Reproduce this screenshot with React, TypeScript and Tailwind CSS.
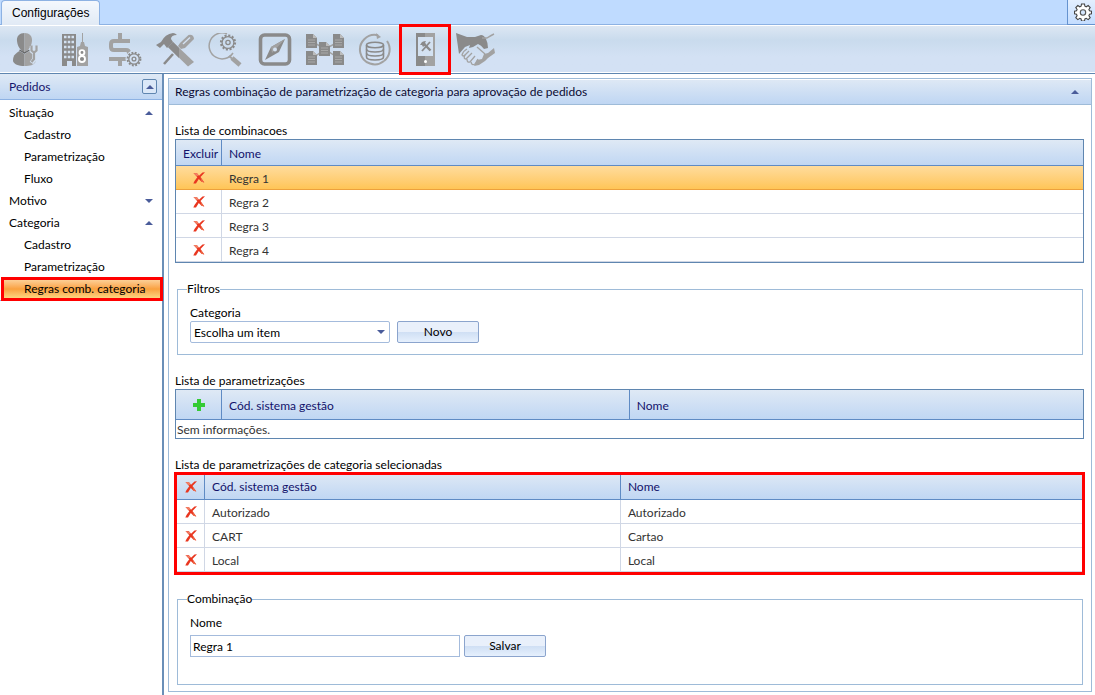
import React, { useState } from "react";

const DARK = "#8a8a8a";
const LIGHT = "#a2a2a2";

type GearProps = { cx: number; cy: number; r: number };

function Gear({ cx, cy, r }: GearProps) {
  return (
    <g fill="none" stroke={DARK}>
      <circle cx={cx} cy={cy} r={r + 0.6} strokeWidth={2} strokeDasharray={`${(r + 0.6) * 0.29} ${(r + 0.6) * 0.2336}`} />
      <circle cx={cx} cy={cy} r={r - 0.6} strokeWidth={1.3} />
      <circle cx={cx} cy={cy} r={r * 0.33} strokeWidth={1.3} />
    </g>
  );
}

function Doc({ x, y }: { x: number; y: number }) {
  return (
    <g>
      <path d={`M${x} ${y}h7l4 4v10h-11z`} fill={DARK} />
      <path d={`M${x + 7} ${y}l4 4h-4z`} fill="#bcbcbc" />
      <path d={`M${x + 2} ${y + 6}h7M${x + 2} ${y + 8.5}h7M${x + 2} ${y + 11}h7`} stroke="#a8a8a8" strokeWidth={1} />
    </g>
  );
}

const tools: { name: string; art: React.ReactNode; active?: boolean }[] = [
  {
    name: "Usuários",
    art: (
      <>
        <path d="M19.500 0c-5 0-8 3-7.500 8 .3 4 2 7 4 9l3.500 3z" fill={DARK} />
        <path d="M19.500 0c5 0 8 3 7.500 8-.3 4-2 7-4 9l-3.500 3z" fill={LIGHT} />
        <path d="M14.500 18l5 3v12c-6 0-11-2-11.500-5 0-5 1.500-7 6.500-10z" fill={DARK} />
        <path d="M24.500 18l-5 3v12c6 0 9-1 11-4l-2.500-8z" fill={LIGHT} />
        <path d="M14.500 17l5 3 5-3" fill="none" stroke="#666" strokeWidth={1.4} />
        <path d="M27 13v5l2.500 2 2.500-2v-5M29.500 19v7l-3 4" fill="none" stroke="#d3e1f1" strokeWidth={4.500} />
        <path d="M26.500 12.500v5l2.500 2 2.500-2v-5M29 19v7l-2.500 3" fill="none" stroke={LIGHT} strokeWidth={2.200} />
      </>
    ),
  },
  {
    name: "Empresas",
    art: (
      <>
        <path d="M7 1h14v32h-4v-5h-5v5H7z" fill={DARK} />
        <path d="M9 4h10M9 9h10M9 14h10M9 19h10M9 24h10" stroke="#d3e1f1" strokeWidth={2.500} strokeDasharray="2.500 1.250" />
        <path d="M22 33V14l3-1 1-4h1V0h1v9h1l1 4 3 1v19z" fill={LIGHT} />
        <circle cx="27" cy="19.500" r="2.400" fill={DARK} stroke="#fff" strokeWidth={1.900} />
        <circle cx="27" cy="26" r="3" fill={DARK} stroke="#fff" strokeWidth={1.900} />
      </>
    ),
  },
  {
    name: "Financeiro",
    art: (
      <>
        <path d="M15 0v8M15 26v7" stroke={LIGHT} strokeWidth={4} />
        <path d="M25 8H9q-3 0-3 3v3q0 3 3 3h12q3 0 3 3v3q0 3-3 3H4" fill="none" stroke={LIGHT} strokeWidth={4} />
        <circle cx="29" cy="26" r="8.500" fill="#d3e1f3" />
        <Gear cx={29} cy={26} r={5.800} />
      </>
    ),
  },
  {
    name: "Ferramentas",
    art: (
      <>
        <path d="M18 21L9 31" stroke={DARK} strokeWidth={2.600} />
        <path d="M25 10l8.500-8q5-1 5.500 4l-9 9-4 1-3-3z" fill={LIGHT} />
        <path d="M28 11l7-6.500" stroke="#d3e1f1" strokeWidth={1.400} />
        <path d="M18 9l21 20-6 4.500L13 14z" fill={LIGHT} />
        <path d="M18 9l6 6v10L13 14z" fill={DARK} />
        <path d="M1 12l5-3q4-8 12-9 2 0 4 2-6 0-6 4l2 3-6 6-3-4-2 2-2 2z" fill={DARK} />
      </>
    ),
  },
  {
    name: "Pesquisa",
    art: (
      <>
        <path d="M28 20A13 13 0 1 1 22 .8" fill="none" stroke={LIGHT} strokeWidth={1.500} />
        <Gear cx={23} cy={9.500} r={6.500} />
        <path d="M24 23l3 2.500" stroke={LIGHT} strokeWidth={2} />
        <path d="M27 25l8 7" fill="none" stroke={LIGHT} strokeWidth={4.500} />
      </>
    ),
  },
  {
    name: "Navegação",
    art: (
      <>
        <rect x="5.500" y="2" width="29" height="29" rx="4" fill="none" stroke={DARK} strokeWidth={3.600} />
        <path d="M30 6L16 14l-6 13 14-8z" fill={DARK} />
        <path d="M30 6L16 14l1 6z" fill={LIGHT} />
        <circle cx="20" cy="16.500" r="2" fill="#d3e1f1" />
      </>
    ),
  },
  {
    name: "Fluxos",
    art: (
      <>
        <path d="M8 9l12 7-12 9M33 9l-13 7 13 9" fill="none" stroke={LIGHT} strokeWidth={1.500} />
        <Doc x={1} y={1} />
        <Doc x={1} y={18} />
        <Doc x={14} y={9} />
        <Doc x={28} y={1} />
        <Doc x={28} y={18} />
      </>
    ),
  },
  {
    name: "Banco de dados",
    art: (
      <>
        <path d="M23 2.300A14.700 14.700 0 1 0 29 28" fill="none" stroke={LIGHT} strokeWidth={2} />
        <path d="M32 8A14.700 14.700 0 0 1 29 28" fill="none" stroke={LIGHT} strokeWidth={2} />
        <path d="M21 0l5 4-4 2z" fill={LIGHT} />
        <path d="M11.500 12v12q0 3 8.500 3t8.500-3V12" fill="none" stroke={DARK} strokeWidth={1.600} />
        <ellipse cx="20" cy="12" rx="8.500" ry="2.700" fill="none" stroke={DARK} strokeWidth={1.600} />
        <path d="M11.500 16q0 3 8.500 3t8.500-3M11.500 20q0 3 8.500 3t8.500-3" fill="none" stroke={DARK} strokeWidth={1.500} />
      </>
    ),
  },
  {
    name: "Dispositivos",
    active: true,
    art: (
      <>
        <path d="M11 0h10v33H11z" fill={DARK} />
        <path d="M20 0h10v33H20z" fill={LIGHT} />
        <path d="M13 4h15v19H13z" fill="#d3e1f1" />
        <path d="M17 18l8-9" stroke={DARK} strokeWidth={1.800} />
        <path d="M18.500 10.500l7 7" stroke={DARK} strokeWidth={2.400} />
        <path d="M15 12l2-3q2-1 4-1l-1 2 1 1-3 3-1-2z" fill={DARK} />
        <circle cx="20.500" cy="28.500" r="1.500" fill="#fff" />
      </>
    ),
  },
  {
    name: "Parcerias",
    art: (
      <>
        <path d="M1 0l11 4h8l6-2q3 0 5 4 2 4 2 9l-4 1q-3-4-6-5l-5 3-4 1 1-3-5 2-6 7z" fill={DARK} />
        <path d="M27 5h5q3-2 7-4" fill="none" stroke={LIGHT} strokeWidth={1.400} />
        <g fill="none" stroke={LIGHT} strokeWidth={1.300}>
          <path d="M12 16q-4 2-5 6 1 2 3 0l4-4" />
          <path d="M10 22q-2 4 1 4l6-6" />
          <path d="M12 26q0 4 3 3l5-6" />
          <path d="M16 29q1 4 4 2l3-5" />
          <path d="M22 14l8 7" />
        </g>
        <path d="M39 15l1 5-7 5-3 3-6 4-5 1 3-6 5-1 2-5 4-1z" fill={LIGHT} />
      </>
    ),
  },
];

function DeleteIcon() {
  return (
    <svg width="12" height="12" viewBox="0 0 12 12" fill="none" className="block" aria-hidden="true">
      <path d="M.5 1l3.500.3L6 3.800 9.500.5 12 .3 7.500 5l3.800 5.500-2.800-.8L5.800 7 3 11.500.3 11.500 1.500 9 4.300 5.200z" fill="#e9361f" />
      <path d="M.5 1l3.500.3L5.500 3.200 4 4.200z" fill="#f38468" />
      <path d="M7.500 5.500l3.800 5-2.800-.8z" fill="#ee6a48" />
    </svg>
  );
}

function Arrow({ down = false }: { down?: boolean }) {
  return (
    <svg width="8" height="4" viewBox="0 0 8 4" className="block" aria-hidden="true">
      <path d={down ? "M0 0h8L4 4z" : "M0 4h8L4 0z"} fill="#4a5c9a" />
    </svg>
  );
}

const headRow = "bg-linear-to-b from-[#dfe9f5] to-[#bfd6f3] text-[#12126b]";
const buttonLook =
  "h-[22px] w-[82px] rounded-xs border border-[#8ba4cd] bg-linear-to-b from-[#e9f0fb] from-50% via-[#cfdff4] via-50% to-[#e6f0fd]";
const th = "border-b border-[#5f8bc4] px-[7px] pt-0.5 text-left font-normal";
const td = "h-[24px] border-[#d0d7e5] px-[7px] pt-0.5";

function DeleteButton({ label }: { label: string }) {
  return (
    <button type="button" aria-label={label} className="mx-auto block">
      <DeleteIcon />
    </button>
  );
}

const menu: { title: string; open: boolean; items: string[] }[] = [
  { title: "Situação", open: true, items: ["Cadastro", "Parametrização", "Fluxo"] },
  { title: "Motivo", open: false, items: [] },
  { title: "Categoria", open: true, items: ["Cadastro", "Parametrização", "Regras comb. categoria"] },
];

const rules = ["Regra 1", "Regra 2", "Regra 3", "Regra 4"];
const selectedParams = [
  ["Autorizado", "Autorizado"],
  ["CART", "Cartao"],
  ["Local", "Local"],
];

export default function App() {
  const [name, setName] = useState("Regra 1");
  return (
    <div className="flex min-h-screen flex-col bg-white font-[Lato,'Open_Sans',sans-serif] text-[12px] leading-4 text-black">
      <header>
        <div className="flex h-[25px] justify-between border-b border-[#8db2e3] bg-[#bfdbff]">
          <button
            type="button"
            className="ml-px h-[25px] rounded-t-sm border border-b-0 border-[#8db2e3] bg-linear-to-b from-[#f4f8fd] to-[#e1eaf5] px-2.5 font-['Liberation_Sans',Arial,sans-serif]"
          >
            Configurações
          </button>
          <button
            type="button"
            aria-label="Preferências"
            className="flex h-[25px] w-7 items-center justify-center border-b border-l border-[#6593cf] bg-linear-to-b from-[#e3efff] to-[#c4ddff]"
          >
            <svg width="18" height="18" viewBox="0 0 18 18" className="ml-0.5" aria-hidden="true">
              <path
                d="M7.500 1h3l.4 2.200 1.300.6 2-1.300 2 2-1.300 2 .6 1.300 2 .4v2.600l-2 .4-.6 1.400 1.300 2-2 2-2-1.300-1.300.6-.4 2.100h-3l-.4-2.100-1.300-.6-2 1.300-2-2 1.300-2-.6-1.400L.5 10.800V8.200l2-.4.6-1.300-1.300-2 2-2 2 1.300 1.300-.6z"
                fill="#fff"
                stroke="#444"
                strokeWidth="1.100"
              />
              <circle cx="9" cy="9.500" r="2.700" fill="#d5e7ff" stroke="#555" strokeWidth="1.100" />
            </svg>
          </button>
        </div>
        <nav
          aria-label="Configurações"
          className="flex h-[49px] items-center border-y border-t-white border-b-[#5f86b0] bg-linear-to-b from-[#dde7f3] from-0% via-[#c9dbed] via-30% to-[#d3e1f4] to-65% shadow-[inset_0_-1px_0_#fff]"
        >
          {tools.map((t) => (
            <button
              key={t.name}
              type="button"
              aria-label={t.name}
              className={
                t.active
                  ? "flex h-[49px] w-[50px] items-center justify-center outline-3 -outline-offset-2 outline-[#ff0000]"
                  : "flex h-[49px] w-[50px] items-center justify-center"
              }
            >
              <svg width="40" height="34" viewBox="0 0 40 34" aria-hidden="true">
                {t.art}
              </svg>
            </button>
          ))}
        </nav>
      </header>

      <div className="flex flex-1">
        <aside className="w-[164px] shrink-0 border-r-2 border-[#6a8fb8]">
          <div className="flex h-[26px] items-center justify-between border-b border-[#8db2e3] bg-linear-to-b from-[#dfe9f5] to-[#bfd6f3] pr-[5px] pl-[9px] text-[#15156b]">
            <h2>Pedidos</h2>
            <button
              type="button"
              aria-label="Recolher"
              className="flex size-[15px] items-center justify-center rounded-xs border border-[#5f86b0] bg-[#dbe8f8]"
            >
              <Arrow />
            </button>
          </div>
          <ul className="border-b border-[#8db2e3] pt-0.5">
            {menu.map((group) => (
              <li key={group.title}>
                <button type="button" className="flex h-[22px] w-full items-center justify-between pr-[9px] pl-[9px]">
                  {group.title}
                  <Arrow down={!group.open} />
                </button>
                <ul>
                  {group.items.map((item) => (
                    <li key={item}>
                      <a
                        href="#"
                        className={
                          item.startsWith("Regras")
                            ? "ml-0.5 flex h-[22px] items-center bg-linear-to-b from-[#fcd9a5] via-[#f9a13e] via-50% to-[#fbe08c] pl-[22px] whitespace-nowrap outline-3 -outline-offset-2 outline-[#ff0000]"
                            : "flex h-[22px] items-center pl-6"
                        }
                      >
                        {item}
                      </a>
                    </li>
                  ))}
                </ul>
              </li>
            ))}
          </ul>
        </aside>

        <main className="min-w-0 flex-1 px-1 pt-1 pr-[3px] pb-[3px]">
          <section className="h-full border border-[#9ebbd8]">
            <div className="flex h-[26px] items-center justify-between border-b border-[#9ebbd8] bg-linear-to-b from-[#dfe9f5] to-[#bfd6f3] pr-3 pl-1.5 text-[#0b0b33] shadow-[inset_0_1px_0_#fff]">
              <h1>Regras combinação de parametrização de categoria para aprovação de pedidos</h1>
              <button type="button" aria-label="Recolher painel">
                <Arrow />
              </button>
            </div>

            <div className="px-1.5 pt-[18px] pr-[7px]">
              <h2>Lista de combinacoes</h2>
              <table className="w-full table-fixed border-separate border-spacing-0 border border-[#5f86b0] text-[#333]">
                <thead>
                  <tr className={headRow}>
                    <th className={`${th} h-[26px] w-[46px] border-r whitespace-nowrap`}>Excluir</th>
                    <th className={th}>Nome</th>
                  </tr>
                </thead>
                <tbody>
                  {rules.map((r, i) =>
                    i === 0 ? (
                      <tr key={r} className="bg-linear-to-b from-[#ffdc9c] to-[#ffc452]">
                        <td className="h-[24px] border-b border-[#eda13c]">
                          <DeleteButton label={`Excluir ${r}`} />
                        </td>
                        <td className="h-[24px] border-b border-[#eda13c] px-[7px] pt-0.5">{r}</td>
                      </tr>
                    ) : (
                      <tr key={r}>
                        <td className="h-[24px] border-r border-b border-[#d0d7e5]">
                          <DeleteButton label={`Excluir ${r}`} />
                        </td>
                        <td className={`${td} border-b`}>{r}</td>
                      </tr>
                    )
                  )}
                </tbody>
              </table>

              <fieldset className="mx-px mt-[18px] ml-0.5 border border-[#9ebbd8] px-3 pb-[11px]">
                <legend className="-ml-[3px]">Filtros</legend>
                <label htmlFor="categoria" className="mt-2 block">
                  Categoria
                </label>
                <div className="flex gap-[7px]">
                  <div className="grid w-[200px] items-center">
                    <select
                      id="categoria"
                      className="col-start-1 row-start-1 h-[22px] w-full appearance-none rounded-xs border border-[#a4bbdc] bg-white pt-px pl-[3px]"
                    >
                      <option>Escolha um item</option>
                    </select>
                    <span className="pointer-events-none col-start-1 row-start-1 mr-[5px] justify-self-end">
                      <Arrow down />
                    </span>
                  </div>
                  <button type="button" className={buttonLook}>
                    Novo
                  </button>
                </div>
              </fieldset>

              <h2 className="mt-[18px]">Lista de parametrizações</h2>
              <table className="w-full table-fixed border-separate border-spacing-0 border border-[#5f86b0] text-[#333]">
                <thead>
                  <tr className={headRow}>
                    <th className="h-[30px] w-[46px] border-r border-b border-[#5f8bc4]">
                      <button type="button" aria-label="Adicionar" className="mx-auto block">
                        <svg width="12" height="12" viewBox="0 0 12 12" className="block" aria-hidden="true">
                          <path d="M4 0h4v4h4v4H8v4H4V8H0V4h4z" fill="#34cb34" />
                        </svg>
                      </button>
                    </th>
                    <th className={`${th} w-[45%] border-r`}>Cód. sistema gestão</th>
                    <th className={`${th} w-1/2`}>Nome</th>
                  </tr>
                </thead>
                <tbody>
                  <tr>
                    <td colSpan={3} className="h-[18px] px-px pt-0.5">
                      Sem informações.
                    </td>
                  </tr>
                </tbody>
              </table>

              <h2 className="mt-[18px]">Lista de parametrizações de categoria selecionadas</h2>
              <table className="w-full table-fixed border-separate border-spacing-0 border-2 border-t-0 border-[#ff0000] text-[#333] outline-3 -outline-offset-2 outline-[#ff0000]">
                <thead>
                  <tr className={headRow}>
                    <th className="h-[27px] w-[28px] border-r border-b border-[#5f8bc4] pt-0.5">
                      <DeleteButton label="Excluir todos" />
                    </th>
                    <th className={`${th} w-[46%] border-r`}>Cód. sistema gestão</th>
                    <th className={`${th} w-[51%]`}>Nome</th>
                  </tr>
                </thead>
                <tbody>
                  {selectedParams.map(([code, label]) => (
                    <tr key={code}>
                      <td className="h-[24px] border-r border-b border-[#d0d7e5]">
                        <DeleteButton label={`Excluir ${label}`} />
                      </td>
                      <td className={`${td} border-r border-b`}>{code}</td>
                      <td className={`${td} border-b`}>{label}</td>
                    </tr>
                  ))}
                </tbody>
              </table>

              <fieldset className="mx-px mt-[17px] ml-0.5 border border-[#9ebbd8] px-3 pb-[27px]">
                <legend className="-ml-[3px]">Combinação</legend>
                <label htmlFor="nome" className="mt-2 block">
                  Nome
                </label>
                <div className="mt-1 flex gap-1">
                  <input
                    id="nome"
                    type="text"
                    value={name}
                    onChange={(e) => setName(e.target.value)}
                    className="h-[22px] w-[270px] border border-[#a4bbdc] bg-white px-0.5"
                  />
                  <button type="button" className={buttonLook}>
                    Salvar
                  </button>
                </div>
              </fieldset>
            </div>
          </section>
        </main>
      </div>
    </div>
  );
}
